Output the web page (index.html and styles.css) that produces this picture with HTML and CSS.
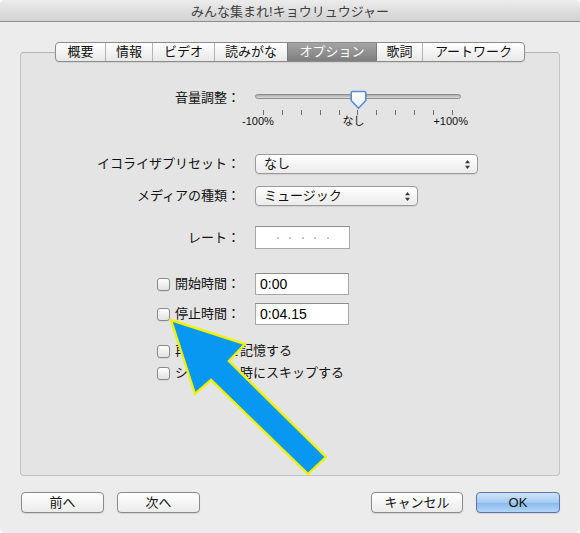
FILE: index.html
```html
<!DOCTYPE html>
<html lang="ja">
<head>
<meta charset="utf-8">
<title>みんな集まれ!キョウリュウジャー</title>
<link rel="stylesheet" href="styles.css">
</head>
<body>
<div class="window">
  <div class="titlebar">みんな集まれ!キョウリュウジャー</div>
  <div class="panel">
    <div class="tabs">
      <div class="tab t1">概要</div>
      <div class="tab t2">情報</div>
      <div class="tab t3">ビデオ</div>
      <div class="tab t4">読みがな</div>
      <div class="tab t5 sel">オプション</div>
      <div class="tab t6">歌詞</div>
      <div class="tab t7">アートワーク</div>
    </div>
    <div class="box">
      <div class="row vol">
        <div class="lbl">音量調整：</div>
        <div class="slider">
          <div class="track"></div>
          <svg class="knob" width="17" height="20" viewBox="0 0 17 20">
            <defs>
              <linearGradient id="kg" x1="0" y1="0" x2="0" y2="1">
                <stop offset="0" stop-color="#ffffff"/>
                <stop offset="1" stop-color="#e6eef8"/>
              </linearGradient>
            </defs>
            <path d="M2.5 1.5 H14.5 Q15.8 1.5 15.8 3 V10.5 L8.5 18.3 L1.2 10.5 V3 Q1.2 1.5 2.5 1.5 Z" fill="url(#kg)" stroke="#5a8ed3" stroke-width="1.6" stroke-linejoin="round"/>
          </svg>
          <div class="ticks"><i></i><i></i><i></i><i></i><i></i><i></i><i></i><i></i><i></i><i></i><i></i></div>
          <div class="scale"><span>-100%</span><span class="mid">なし</span><span>+100%</span></div>
        </div>
      </div>
      <div class="row r-eq">
        <div class="lbl">イコライザプリセット：</div>
        <div class="popup eq"><span>なし</span>
          <svg class="updown" width="7" height="11" viewBox="0 0 7 11"><path d="M1 4.2 L3.5 1 L6 4.2 Z M1 6.8 L3.5 10 L6 6.8 Z" fill="#3a3a3a"/></svg>
        </div>
      </div>
      <div class="row r-media">
        <div class="lbl">メディアの種類：</div>
        <div class="popup media"><span>ミュージック</span>
          <svg class="updown" width="7" height="11" viewBox="0 0 7 11"><path d="M1 4.2 L3.5 1 L6 4.2 Z M1 6.8 L3.5 10 L6 6.8 Z" fill="#3a3a3a"/></svg>
        </div>
      </div>
      <div class="row r-rate">
        <div class="lbl">レート：</div>
        <div class="field rate"><i></i><i></i><i></i><i></i><i></i></div>
      </div>
      <div class="row r-start">
        <div class="lbl"><span class="cb"></span><span>開始時間：</span></div>
        <div class="field time">0:00</div>
      </div>
      <div class="row r-stop">
        <div class="lbl"><span class="cb"></span><span>停止時間：</span></div>
        <div class="field time">0:04.15</div>
      </div>
      <div class="row chk c1"><span class="cb"></span><span>再生位置を記憶する</span></div>
      <div class="row chk c2"><span class="cb"></span><span>シャッフル時にスキップする</span></div>
    </div>
    <div class="buttons">
      <div class="btn prev">前へ</div>
      <div class="btn next">次へ</div>
      <div class="spacer"></div>
      <div class="btn cancel">キャンセル</div>
      <div class="btn ok">OK</div>
    </div>
  </div>
  <svg class="arrow" width="580" height="533" viewBox="0 0 580 533">
    <polygon points="171,320 245,344 229,361 326,457 308,474 211,380 195,394" fill="#0898f2" stroke="#f4f200" stroke-width="2.4" stroke-linejoin="miter"/>
  </svg>
</div>
</body>
</html>
```
FILE: styles.css
```css
html, body {
  margin: 0;
  padding: 0;
  background: #ffffff;
}
body {
  width: 580px;
  height: 533px;
  overflow: hidden;
  font-family: "Liberation Sans", "Noto Sans CJK JP", sans-serif;
  font-size: 13px;
  color: #111;
}
.window {
  position: relative;
  width: 580px;
  height: 533px;
  background: #ececec;
  border-radius: 5px;
  overflow: hidden;
}
.titlebar {
  height: 21px;
  border-bottom: 1px solid #8e8e8e;
  background: linear-gradient(#ececec, #d2d2d2);
  text-align: center;
  line-height: 23px;
  color: #3e3e3e;
  font-size: 13px;
}
.panel {
  padding-top: 20px;
}
.tabs {
  display: flex;
  width: max-content;
  margin: 0 auto -10px;
  position: relative;
  z-index: 1;
  height: 20px;
  box-sizing: border-box;
  border: 1px solid #8c8c8c;
  border-radius: 4px;
  background: linear-gradient(#ffffff, #e8e8e8);
  overflow: hidden;
  box-shadow: 0 1px 1px rgba(0, 0, 0, 0.08);
}
.tab {
  box-sizing: border-box;
  height: 18px;
  line-height: 18px;
  text-align: center;
  border-left: 1px solid #b3b3b3;
  color: #111;
}
.tab.t1 { width: 49px; border-left: none; }
.tab.t2 { width: 47px; }
.tab.t3 { width: 62px; }
.tab.t4 { width: 73px; }
.tab.t5 { width: 89px; }
.tab.t6 { width: 46px; }
.tab.t7 { width: 102px; }
.tab.sel {
  background: linear-gradient(#a4a4a4, #7e7e7e);
  color: #ffffff;
  border-left-color: #7a7a7a;
}
.tab.sel + .tab {
  border-left-color: #7a7a7a;
}
.box {
  margin: 0 20px 0 20px;
  height: 424px;
  box-sizing: border-box;
  border: 1px solid #c3c3c3;
  border-top-color: #b4b4b4;
  border-radius: 4px;
  background: #e4e4e4;
  padding-top: 35px;
}
.row {
  display: flex;
  align-items: center;
}
.lbl {
  width: 219px;
  flex: none;
  display: flex;
  justify-content: flex-end;
  align-items: center;
  gap: 5px;
  line-height: 20px;
}
.row.vol {
  align-items: flex-start;
  height: 40px;
}
.slider {
  position: relative;
  width: 206px;
  margin-left: 15px;
}
.track {
  height: 5px;
  margin-top: 6px;
  box-sizing: border-box;
  border: 1px solid #8d8d8d;
  border-radius: 3px;
  background: linear-gradient(#aaaaaa, #dedede);
}
.knob {
  position: absolute;
  left: 95px;
  top: 2px;
}
.ticks {
  display: flex;
  justify-content: space-between;
  margin: 11px 8px 0;
  height: 5px;
}
.ticks i {
  width: 1px;
  background: #6e6e6e;
}
.scale {
  display: flex;
  justify-content: space-between;
  margin: 0 -7px 0 -13px;
  font-size: 11px;
  line-height: 13px;
  color: #111;
}
.r-eq { margin-top: 26px; height: 20px; }
.r-media { margin-top: 12px; height: 20px; }
.r-rate { margin-top: 20px; height: 23px; }
.r-start { margin-top: 24px; height: 22px; }
.r-stop { margin-top: 8px; height: 22px; }
.chk.c1 { margin-top: 16px; height: 20px; }
.chk.c2 { margin-top: 2px; height: 20px; }
.popup {
  margin-left: 15px;
  height: 20px;
  box-sizing: border-box;
  border: 1px solid #9a9a9a;
  border-radius: 4px;
  background: linear-gradient(#ffffff, #ebebeb);
  display: flex;
  align-items: center;
  justify-content: space-between;
  padding: 0 6px 0 8px;
  box-shadow: 0 1px 1px rgba(0, 0, 0, 0.08);
  line-height: 18px;
}
.popup.eq { width: 223px; }
.popup.media { width: 163px; }
.field {
  margin-left: 15px;
  height: 100%;
  box-sizing: border-box;
  border: 1px solid #a8a8a8;
  border-top-color: #8e8e8e;
  background: #ffffff;
  display: flex;
  align-items: center;
}
.field.rate {
  width: 95px;
  padding-left: 21px;
  gap: 10.4px;
}
.field.rate i {
  width: 2px;
  height: 2px;
  background: #c8c8c8;
}
.field.time {
  width: 94px;
  padding-left: 4px;
  font-size: 14px;
  color: #000;
}
.cb {
  width: 13px;
  height: 13px;
  flex: none;
  box-sizing: border-box;
  border: 1px solid #8a8a8a;
  border-radius: 3px;
  background: linear-gradient(#fefefe, #e2e2e2);
  box-shadow: 0 1px 0 rgba(0, 0, 0, 0.06);
}
.row.chk {
  padding-left: 136px;
  gap: 5px;
  line-height: 20px;
}
.buttons {
  display: flex;
  gap: 13px;
  margin-top: 16px;
  padding: 0 20px 0 21px;
}
.spacer {
  flex: 1;
}
.btn {
  height: 21px;
  box-sizing: border-box;
  border: 1px solid #8a8a8a;
  border-radius: 4px;
  background: linear-gradient(#ffffff, #ebebeb);
  text-align: center;
  line-height: 19px;
  box-shadow: 0 1px 1px rgba(0, 0, 0, 0.1);
  color: #111;
}
.btn.prev { width: 83px; }
.btn.next { width: 83px; }
.btn.cancel { width: 92px; }
.btn.ok {
  width: 84px;
  border-color: #5a76a8;
  background: linear-gradient(#d0e5fb, #a4cbf3 50%, #88b9ee 51%, #b2d6f8);
}
.arrow {
  position: absolute;
  left: 0;
  top: 0;
  pointer-events: none;
}
```
